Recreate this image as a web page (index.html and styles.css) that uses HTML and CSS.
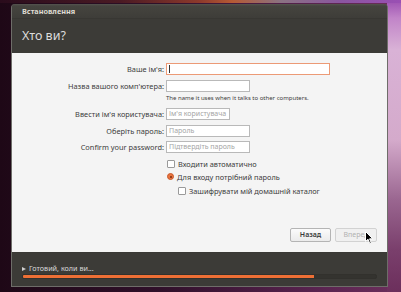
FILE: index.html
```html
<!DOCTYPE html>
<html lang="uk">
<head>
<meta charset="utf-8">
<link rel="stylesheet" href="styles.css">
</head>
<body>
<div class="window">
  <div class="titlebar">Встановлення</div>
  <div class="header"><h1 class="title">Хто ви?</h1></div>
  <div class="content">
    <div class="row r1">
      <span class="label">Ваше ім'я:</span>
      <div class="input focus w164"><span class="caret"></span></div>
    </div>
    <div class="row r2">
      <span class="label">Назва вашого комп'ютера:</span>
      <div class="input w84"></div>
    </div>
    <div class="hint">The name it uses when it talks to other computers.</div>
    <div class="row r3">
      <span class="label">Ввести ім'я користувача:</span>
      <div class="input w64"><span class="ph">Ім'я користувача</span></div>
    </div>
    <div class="row r4">
      <span class="label">Оберіть пароль:</span>
      <div class="input w84"><span class="ph">Пароль</span></div>
    </div>
    <div class="row r5">
      <span class="label">Confirm your password:</span>
      <div class="input w84"><span class="ph">Підтвердіть пароль</span></div>
    </div>
    <div class="options">
      <div class="opt o1"><span class="check"></span>Входити автоматично</div>
      <div class="opt o2"><span class="radio"><span class="dot"></span></span>Для входу потрібний пароль</div>
      <div class="opt o3"><span class="check"></span>Зашифрувати мій домашній каталог</div>
    </div>
    <div class="buttons">
      <div class="btn back">Назад</div>
      <div class="btn fwd">Вперед</div>
    </div>
  </div>
  <div class="footer">
    <div class="status"><span class="tri"></span>Готовий, коли ви...</div>
    <div class="progress"><div class="fill" style="width: 82.5%"></div></div>
  </div>
</div>
<svg class="cursor" width="9" height="14" viewBox="0 0 9 14"><path d="M0.5 0.5 L0.5 10.5 L3 8.2 L4.8 12.6 L6.3 12 L4.6 7.8 L7.8 7.8 Z" fill="#000" stroke="#fff" stroke-width="1"/></svg>
</body>
</html>
```
FILE: styles.css
```css
html, body {
  margin: 0;
  padding: 0;
}
body {
  width: 401px;
  height: 292px;
  overflow: hidden;
  position: relative;
  box-sizing: border-box;
  padding: 4px 13px 5px 11px;
  font-family: "Noto Sans", "DejaVu Sans", sans-serif;
  background:
    linear-gradient(to right, #2a0c1c 0%, #4a1a24 30%, #8e3a2c 50%, #b55a35 58%, #8a7282 70%, #8a55a0 85%, #9a4fb4 100%) top left / 100% 3px no-repeat,
    linear-gradient(to bottom, #9c50b2 0px, #c184c8 18px, #d9b2d6 50px, #d4aacb 140px, #9a6690 200px, #7a3f6c 250px, #6c2f5c 292px) top right / 14px 100% no-repeat,
    linear-gradient(to right, #1e0816 0%, #30102a 40%, #5a2450 80%, #6c2f5c 100%);
}
.window {
  width: 377px;
  height: 283px;
  display: flex;
  flex-direction: column;
  box-sizing: border-box;
  border: 1px solid #6e6d69;
  border-top: none;
  border-radius: 4px 4px 0 0;
  overflow: hidden;
  background: #3c3b37;
}
.titlebar {
  height: 15px;
  box-sizing: border-box;
  padding: 3px 0 0 10px;
  color: #dfdbd2;
  font-weight: bold;
  font-size: 7.3px;
  line-height: 9px;
  background: linear-gradient(to bottom, #55544f 0px, #45443f 2px, #3e3d39 100%);
  border-bottom: 1px solid #383733;
}
.header {
  height: 34px;
  box-sizing: border-box;
  padding: 9px 0 0 10px;
}
.title {
  margin: 0;
  font-weight: normal;
  font-size: 12.5px;
  line-height: 16px;
  color: #dcdcdc;
}
.content {
  flex: 1;
  background: #f4f4f4;
  display: flex;
  flex-direction: column;
  padding: 10px 10px 10px 0;
  color: #3c3c3c;
  font-size: 7.4px;
}
.row {
  display: grid;
  grid-template-columns: 152px auto;
  column-gap: 2px;
  height: 12px;
  align-items: center;
  margin-top: 5px;
}
.row.r1 { margin-top: 0; }
.row.r5 { margin-top: 4px; }
.label {
  text-align: right;
  white-space: nowrap;
  line-height: 12px;
}
.input {
  height: 12px;
  box-sizing: border-box;
  border: 1px solid #b9b9b9;
  background: #fff;
  display: flex;
  align-items: center;
  padding-left: 2px;
  font-size: 7px;
}
.input.focus {
  border-color: #ec9a76;
}
.w164 { width: 164px; }
.w84 { width: 84px; }
.w64 { width: 64px; }
.caret {
  width: 1px;
  height: 8px;
  background: #333;
}
.ph {
  color: #a5a5a5;
  line-height: 10px;
  white-space: nowrap;
}
.hint {
  margin: 1px 0 0 154px;
  height: 10px;
  line-height: 10px;
  font-size: 6px;
  color: #3c3c3c;
}
.options {
  margin: 4px 0 0 155px;
  display: flex;
  flex-direction: column;
}
.opt {
  height: 13px;
  display: flex;
  align-items: center;
  white-space: nowrap;
}
.opt.o3 {
  margin-top: 1px;
  padding-left: 11px;
}
.check {
  width: 6px;
  height: 6px;
  border: 1px solid #9a9a9a;
  background: #fff;
  border-radius: 1px;
  margin-right: 3px;
  flex: none;
}
.radio {
  width: 7px;
  height: 7px;
  border-radius: 50%;
  background: #e9743f;
  border: 0.5px solid #c8592b;
  margin-right: 3px;
  display: flex;
  align-items: center;
  justify-content: center;
  flex: none;
  box-sizing: border-box;
}
.dot {
  width: 2px;
  height: 2px;
  border-radius: 50%;
  background: #7a2e10;
}
.buttons {
  margin-top: auto;
  display: flex;
  justify-content: flex-end;
  gap: 4px;
}
.btn {
  height: 14px;
  box-sizing: border-box;
  border: 1px solid #b4b4b4;
  border-radius: 2px;
  background: linear-gradient(to bottom, #fbfbfb, #ebebeb);
  font-size: 7px;
  line-height: 12px;
  text-align: center;
}
.btn.back {
  width: 41px;
  color: #3c3c3c;
  font-weight: 600;
}
.btn.fwd {
  width: 42px;
  color: #b0b0b0;
  border-color: #d2d2d2;
  background: #f0f0f0;
}
.footer {
  height: 34px;
  box-sizing: border-box;
  padding: 11px 10px 0 10px;
  background: #3c3b37;
  border-top: 1px solid #3a3935;
}
.status {
  display: flex;
  align-items: center;
  height: 9px;
  line-height: 9px;
  color: #d8d8d8;
  font-size: 7.2px;
}
.tri {
  width: 0;
  height: 0;
  border-left: 4px solid #cfcfcf;
  border-top: 2.5px solid transparent;
  border-bottom: 2.5px solid transparent;
  margin-right: 3px;
}
.progress {
  margin-top: 1px;
  height: 5px;
  box-sizing: border-box;
  background: #34332f;
  border: 1px solid #32312d;
  border-radius: 2px;
  overflow: hidden;
}
.fill {
  height: 100%;
  background: #ee6f35;
}
.cursor {
  position: absolute;
  left: 365px;
  top: 231px;
}
```
